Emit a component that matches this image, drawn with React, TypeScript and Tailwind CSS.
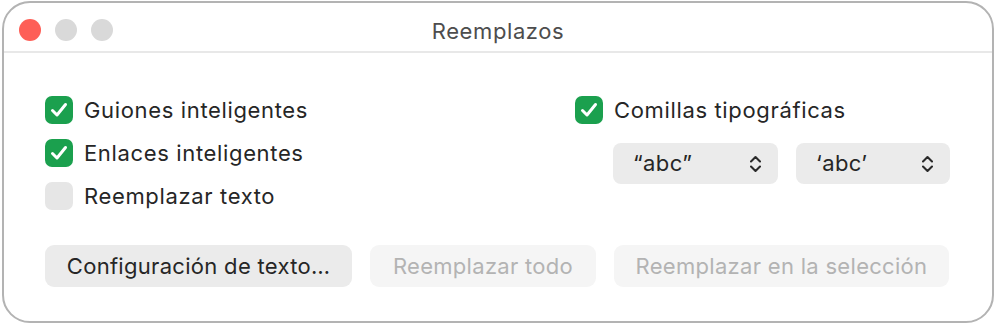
import React from "react";

const font = { fontFamily: "Inter, 'Noto Sans', sans-serif" };

function Check({ on, label }: { on: boolean; label: string }) {
  return (
    <div className="flex items-center h-[28px] gap-[11px]">
      <div
        className={`w-[28px] h-[28px] rounded-[7px] flex items-center justify-center ${
          on ? "bg-[#1ba04e]" : "bg-[#e6e6e6]"
        }`}
      >
        {on && (
          <svg width="20" height="20" viewBox="0 0 20 20" fill="none">
            <path
              d="M3.5 10.5 L8 15 L16.5 4.5"
              stroke="white"
              strokeWidth="3"
              strokeLinecap="round"
              strokeLinejoin="round"
            />
          </svg>
        )}
      </div>
      <span className="text-[22px] text-[#262626] tracking-[0.65px]">{label}</span>
    </div>
  );
}

function Popup({ label, w }: { label: string; w: string }) {
  return (
    <div
      className={`${w} h-[41px] rounded-[8px] bg-[#ebebeb] flex items-center justify-between pl-[20px] pr-[16px]`}
    >
      <span className="text-[22px] text-[#262626] tracking-[0.4px]">{label}</span>
      <svg width="13" height="20" viewBox="0 0 13 20" fill="none">
        <path d="M2 7.5 L6.5 3 L11 7.5" stroke="#2a2a2a" strokeWidth="2.1" strokeLinecap="round" strokeLinejoin="round" />
        <path d="M2 12.5 L6.5 17 L11 12.5" stroke="#2a2a2a" strokeWidth="2.1" strokeLinecap="round" strokeLinejoin="round" />
      </svg>
    </div>
  );
}

export default function App() {
  return (
    <div className="w-[995px] h-[325px] bg-white pt-[1px] pl-[2px]" style={font}>
      <div className="w-[992px] h-[322px] border-2 border-[#b3b3b3] rounded-[28px] overflow-hidden bg-white flex flex-col">
        {/* title bar */}
        <div className="h-[50px] border-b-2 border-[#e8e8e8] flex items-start relative pl-[15px] pt-[16px] gap-[14px]">
          <div className="w-[22px] h-[22px] rounded-full bg-[#fe5f57]" />
          <div className="w-[22px] h-[22px] rounded-full bg-[#d9d9d9]" />
          <div className="w-[22px] h-[22px] rounded-full bg-[#d9d9d9]" />
          <div className="absolute inset-x-0 top-[13px] flex justify-center text-[22px] leading-[30px] text-[#4d4d4d] tracking-[0.6px]">
            Reemplazos
          </div>
        </div>
        {/* body */}
        <div className="flex-1 pl-[41px] pt-[43px]">
          <div className="flex">
            <div className="w-[530px] flex flex-col gap-[15px]">
              <Check on label="Guiones inteligentes" />
              <Check on label="Enlaces inteligentes" />
              <Check on={false} label="Reemplazar texto" />
            </div>
            <div className="flex flex-col">
              <Check on label="Comillas tipográficas" />
              <div className="flex gap-[18px] pl-[38px] mt-[19px]">
                <Popup label="“abc”" w="w-[165px]" />
                <Popup label="‘abc’" w="w-[154px]" />
              </div>
            </div>
          </div>
          <div className="flex mt-[35px]">
            <div className="w-[307px] h-[42px] rounded-[9px] bg-[#ebebeb] flex items-center justify-center text-[22px] text-[#262626] tracking-[0.3px]">
              Configuración de texto…
            </div>
            <div className="ml-[18px] w-[226px] h-[42px] rounded-[9px] bg-[#f5f5f5] flex items-center justify-center text-[22px] text-[#b3b3b3] tracking-[0.3px]">
              Reemplazar todo
            </div>
            <div className="ml-[18px] w-[335px] h-[42px] rounded-[9px] bg-[#f5f5f5] flex items-center justify-center text-[22px] text-[#b3b3b3] tracking-[0.3px]">
              Reemplazar en la selección
            </div>
          </div>
        </div>
      </div>
    </div>
  );
}
